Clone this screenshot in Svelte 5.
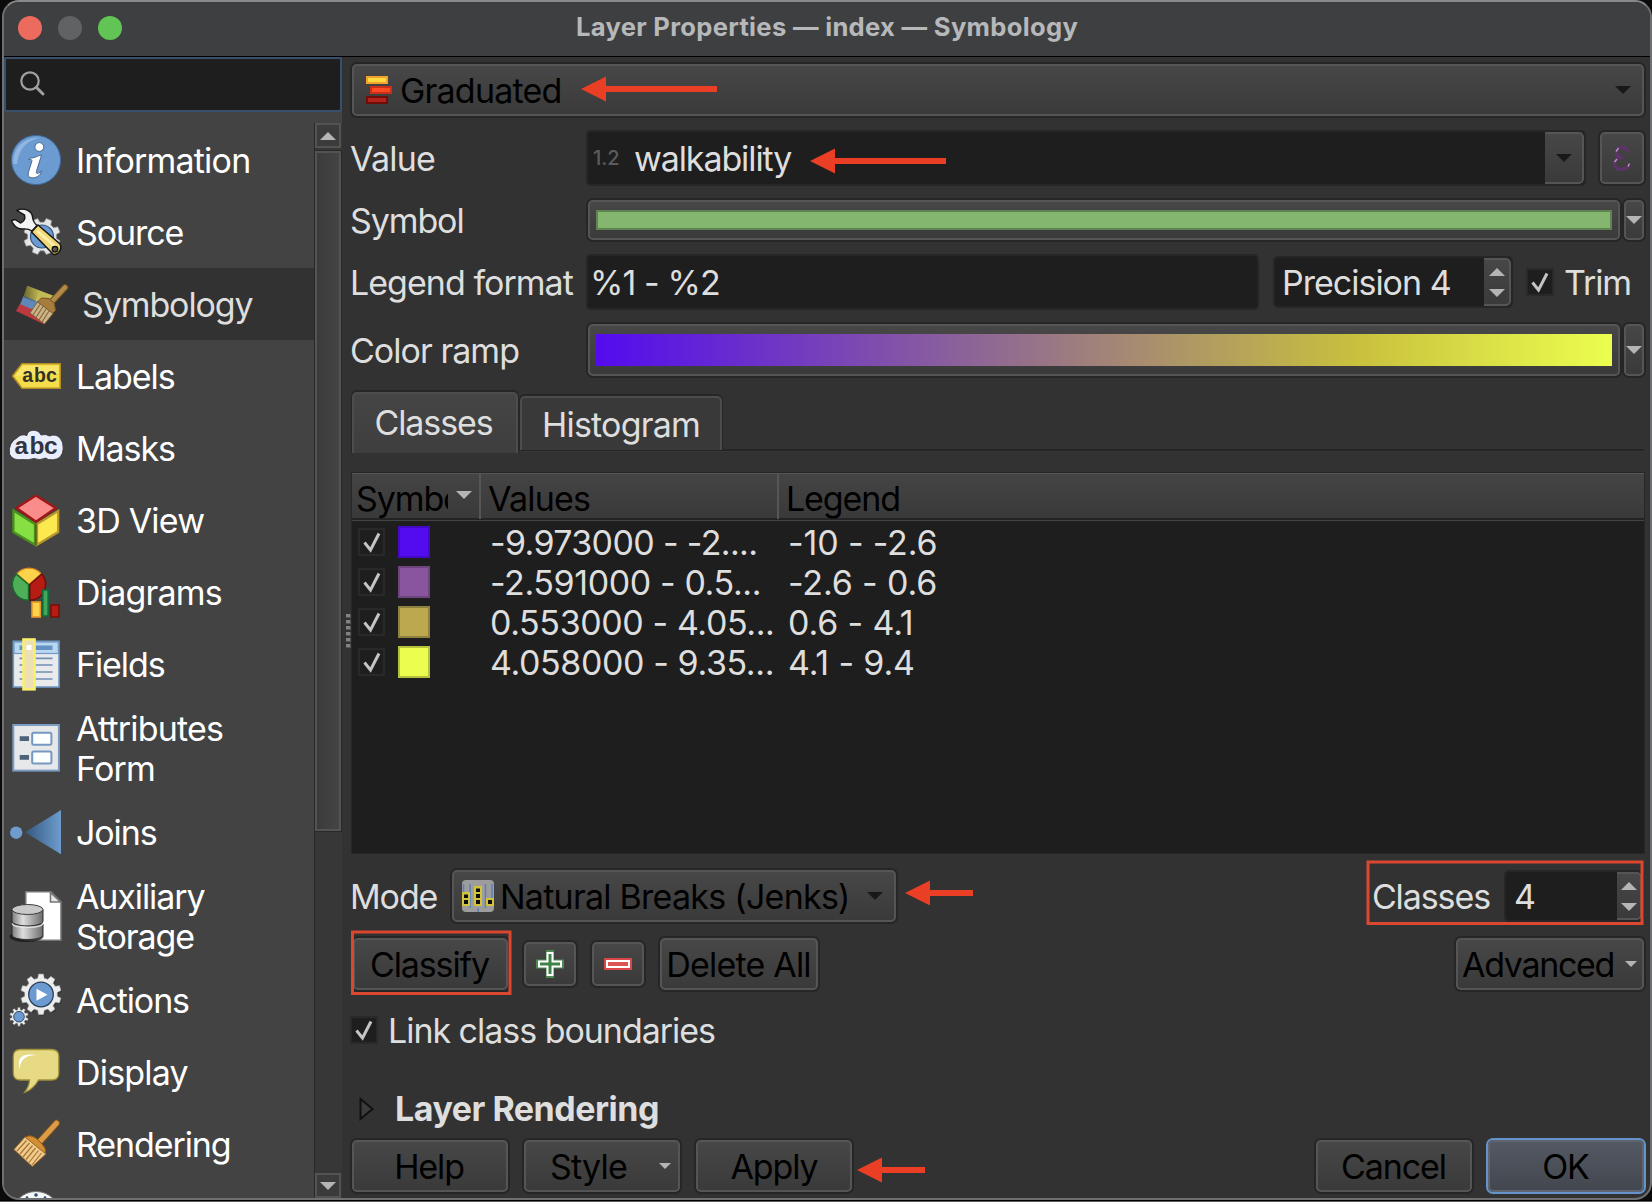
<script>
  // Outline of a toothed wheel centred on (cx, cy).
  function gear(cx, cy, outer, inner, teeth) {
    const step = (Math.PI * 2) / teeth;
    const pts = [];
    for (let i = 0; i < teeth; i++) {
      const a = i * step + step / 2;
      for (const [r, o] of [[inner, -0.32], [outer, -0.2], [outer, 0.2], [inner, 0.32]]) {
        pts.push(`${(cx + r * Math.cos(a + o * step)).toFixed(2)},${(cy + r * Math.sin(a + o * step)).toFixed(2)}`);
      }
    }
    return pts.join(' ');
  }

  const sections = [
    { id: 'info', label: 'Information' },
    { id: 'source', label: 'Source' },
    { id: 'symbology', label: 'Symbology', selected: true },
    { id: 'labels', label: 'Labels' },
    { id: 'masks', label: 'Masks' },
    { id: 'view3d', label: '3D View' },
    { id: 'diagrams', label: 'Diagrams' },
    { id: 'fields', label: 'Fields' },
    { id: 'form', label: 'Attributes Form', tall: true },
    { id: 'joins', label: 'Joins' },
    { id: 'storage', label: 'Auxiliary Storage', tall: true },
    { id: 'actions', label: 'Actions' },
    { id: 'display', label: 'Display' },
    { id: 'rendering', label: 'Rendering' },
    { id: 'temporal', label: '' }
  ];
  const roomy = ['info', 'diagrams', 'form', 'view3d', 'display'];

  const classes = [
    { color: '#530bef', edge: '#4409c4', values: '-9.973000 - -2....', legend: '-10 - -2.6' },
    { color: '#8a559f', edge: '#6f4580', values: '-2.591000 - 0.5...', legend: '-2.6 - 0.6' },
    { color: '#bca94f', edge: '#8f813f', values: '0.553000 - 4.05...', legend: '0.6 - 4.1' },
    { color: '#ebfe4f', edge: '#b3c13d', values: '4.058000 - 9.35...', legend: '4.1 - 9.4' }
  ];

  const arrows = [
    { x: 581, y: 89, end: 717 },
    { x: 810, y: 161, end: 946 },
    { x: 905, y: 893, end: 973 },
    { x: 857, y: 1170, end: 925 }
  ];
</script>

{#snippet tri(kind)}
  <svg class="tri {kind}" viewBox="0 0 16 8"><path d={kind.includes('up') ? 'M0 8L8 0L16 8Z' : 'M0 0H16L8 8Z'} /></svg>
{/snippet}

{#snippet check(kind)}
  <i class="check {kind}"><svg viewBox="0 0 28 28"><path d="M6.5 14.5L12.5 22L21 5.5" /></svg></i>
{/snippet}

{#snippet icon(id)}
  <svg class="icon" viewBox="0 0 52 52">
    {#if id === 'info'}
      <circle cx="26" cy="26" r="24.6" fill="#6b9bd1" stroke="#3c68a0" stroke-width="1" />
      <path d="M3.5 30C2 14 14 3 31 3.5C17 6 9 14 7 30Z" fill="#9dbfe4" opacity=".75" />
      <circle cx="29.3" cy="13" r="4.4" fill="#fff" stroke="#35567f" stroke-width=".8" />
      <path d="M20.5 24C24 24.5 27 22 31.5 21L26.5 37C25.6 40.5 28.5 40 31.5 37C30 42.5 25.5 44 22 43.8C18.5 43.5 17.5 41.5 18.7 37.5L21.8 27.5C22.3 25.5 21.5 25.3 18.5 25.4Z" fill="#fff" stroke="#35567f" stroke-width=".8" />
    {:else if id === 'source'}
      <polygon points={gear(32, 30.5, 18.5, 14.5, 8)} fill="#e4e5e6" stroke="#9a9a9a" stroke-width=".7" />
      <circle cx="32" cy="30.5" r="11.5" fill="#6b9bd1" stroke="#33557f" stroke-width="1.2" />
      <path d="M7 4.5C14 1 22 5 22.5 11C23 15 24 17 27 19.5L22 25C18.5 22.5 16 22.5 12 23C7 23 3 19 1.5 14.5L5 13.5L10.5 17C14 15.5 15.5 12.5 14.5 9Z" fill="#f3f3f3" stroke="#161616" stroke-width="1.4" />
      <path d="M21.5 26L28 19L50 38C52.5 43 48.5 49 43.5 48.5Z" fill="#f1d777" stroke="#161616" stroke-width="1.5" />
      <path d="M27 25L46 41" stroke="#fff0ae" stroke-width="2.5" />
      <circle cx="45" cy="43.3" r="2.8" fill="#5b5a50" stroke="#111" stroke-width="1.3" />
    {:else if id === 'symbology'}
      <defs><linearGradient id="fold"><stop offset="0" stop-color="#000" stop-opacity=".45" /><stop offset="1" stop-color="#000" stop-opacity="0" /></linearGradient></defs>
      <path d="M11.3 7.7L39.5 18.5L35 30L7.5 19Z" fill="#c4ba55" />
      <path d="M7.5 18L35.5 29L32 38L3.8 27Z" fill="#5f87b8" />
      <path d="M3.8 26L31.5 38L27.3 46L0 33Z" fill="#bd383f" />
      <path d="M11.3 7.7L24 12.6L19 24L7.5 19Z" fill="url(#fold)" />
      <path d="M49 9.5L36 23.5" stroke="#6e5223" stroke-width="6.5" stroke-linecap="round" />
      <path d="M49 9.5L35 24.5" stroke="#b28a45" stroke-width="4.5" stroke-linecap="round" />
      <path d="M25.5 20L33 20.5L38.5 25.5L39.5 32.5L36.5 35.5L21.5 24Z" fill="#a67d3c" stroke="#6e5223" stroke-width="1" />
      <path d="M21.5 24L37 35.5L28.5 46L14 35Z" fill="#cdb488" stroke="#75592c" stroke-width=".8" />
      <path d="M24 26.5L17 37M27 28.5L20 39.5M30 31L23 42M33 33L26 44" stroke="#80643a" stroke-width="1.1" />
    {:else if id === 'labels'}
      <path d="M2.6 26L12 13.8H50.2V38.2H12Z" fill="#f5dc4b" stroke="#b38f22" stroke-width="1.6" />
      <path d="M5.5 26L13 15.8H48.5V24Z" fill="#faea7c" opacity=".6" />
      <text x="12.3 24 36" y="31.8" font-size="19.5" class="abc">abc</text>
    {:else if id === 'masks'}
      <path d="M7.5 15.5Q11 11.5 17 13.5Q17.5 8.500 23.5 8.3Q29 8.5 31 13Q36 11.5 39.5 14Q46 11.5 50 16Q53.500 20 53.200 27Q52.500 37 43 37.8Q38 38.2 35.5 36Q30 39 24 36.5Q18 38.5 12.5 37.5Q2.500 39 -.5 32Q-2 20.5 7.5 15.5Z" fill="#eaedfb" stroke="#2e2f33" stroke-width=".8" />
      <text x="4.5 19.5 34" y="31.8" font-size="24.5" class="abc blue">abc</text>
    {:else if id === 'view3d'}
      <path d="M3.4 16.5L25 30V50.8L3.4 38Z" fill="#86e043" stroke="#49901d" stroke-width="2.3" />
      <path d="M48.2 17L27 30V50.8L48.2 38Z" fill="#fce94f" stroke="#b8962e" stroke-width="2.3" />
      <path d="M25.8 1.6L45.8 14L26 27.7L6.5 14Z" fill="#fb8c8c" stroke="#a01717" stroke-width="2.4" />
      <path d="M26 29.5V51.5" stroke="#4a5a12" stroke-width="1.4" />
    {:else if id === 'diagrams'}
      <path d="M19 18.3L6.7 7.9A16 16 0 0 1 31.3 7.9Z" fill="#fcd34a" stroke="#d98a1c" stroke-width="1.4" />
      <path d="M18.5 18.5V34.3A16 16 0 0 1 6.2 8Z" fill="#4fae58" stroke="#176b2c" stroke-width="1.4" />
      <path d="M19.8 18.5V34.3A16 16 0 0 0 31.8 8Z" fill="#b51d14" stroke="#6d0d08" stroke-width="1.4" />
      <rect x="22" y="36" width="8.3" height="15" fill="#fcd34a" stroke="#e8962a" stroke-width="1.6" />
      <rect x="32.8" y="24" width="5.4" height="26" fill="#43a65b" stroke="#126b3b" stroke-width="1.6" />
      <rect x="41" y="39" width="8" height="12" fill="#b51d14" stroke="#7c0f08" stroke-width="1.6" />
    {:else if id === 'fields'}
      <rect x="3.3" y="3.3" width="45.7" height="45.7" fill="#e8eaec" stroke="#6f99c6" stroke-width="1.6" />
      <rect x="4" y="4" width="44.3" height="11.5" fill="#b9d8f0" stroke="#6f99c6" stroke-width="1.2" />
      <path d="M9.5 9.7H42.5" stroke="#6592c4" stroke-width="4.6" />
      <path d="M9.5 20.3H42.5M9.5 27H42.5M9.5 34H42.5M9.5 41H42.5" stroke="#6f8fb3" stroke-width="1.7" />
      <rect x="13.4" y="1.4" width="11.2" height="50" fill="#ece0b4" stroke="#fbf06c" stroke-width="2.4" />
      <rect x="16.5" y="7" width="5" height="5" fill="#fff" />
    {:else if id === 'form'}
      <rect x="3.3" y="3" width="45.6" height="45.6" fill="#e6e8ea" stroke="#7c9cc2" stroke-width="2" />
      <rect x="22.2" y="10.7" width="19.2" height="12" rx="1.5" fill="#fbffff" stroke="#7697bf" stroke-width="2" />
      <rect x="22.2" y="29.5" width="19.2" height="12" rx="1.5" fill="#fbffff" stroke="#7697bf" stroke-width="2" />
      <path d="M9.7 16.7H19M9.7 35.3H19" stroke="#4d6179" stroke-width="4.7" />
    {:else if id === 'joins'}
      <defs><linearGradient id="cone"><stop offset="0" stop-color="#34587f" /><stop offset="1" stop-color="#6d9ccd" /></linearGradient></defs>
      <circle cx="6.2" cy="26.7" r="6.2" fill="#6d9ccd" />
      <path d="M15 26.3L51 4V48.3Z" fill="url(#cone)" />
    {:else if id === 'storage'}
      <defs><linearGradient id="drum"><stop offset="0" stop-color="#7d7d7d" /><stop offset=".35" stop-color="#dedede" /><stop offset="1" stop-color="#6b6b6b" /></linearGradient></defs>
      <path d="M15.7 1.7H41L51 12V50.3H15.7Z" fill="#fff" stroke="#757575" stroke-width="1.6" />
      <path d="M40.5 2.5V12H50.5Z" fill="#e8e8e8" stroke="#757575" stroke-width="1.6" />
      <ellipse cx="16.5" cy="46.5" rx="17" ry="5.5" fill="#111" opacity=".7" />
      <path d="M2 34V45C2 51 33 51 33 45V34Z" fill="url(#drum)" stroke="#2b2b2b" stroke-width="1" />
      <path d="M2 19.5V31C2 37.5 33 37.5 33 31V19.5Z" fill="url(#drum)" stroke="#2b2b2b" stroke-width="1" />
      <path d="M2 33.5C4 38.8 31 38.8 33 33.5" fill="none" stroke="#e6e6e6" stroke-width="1.2" />
      <ellipse cx="17.5" cy="19.5" rx="15.5" ry="5" fill="#c9c9c9" stroke="#3c3c3c" stroke-width="1" />
    {:else if id === 'actions'}
      <polygon points={gear(32, 21.5, 20.5, 16.5, 10)} fill="#222" opacity=".5" />
      <polygon points={gear(31, 20.3, 20.5, 16.5, 10)} fill="#eceded" stroke="#8b8b8b" stroke-width=".6" />
      <circle cx="31" cy="20.5" r="12.3" fill="#6b9bd1" stroke="#2a3d55" stroke-width="1.3" />
      <path d="M26.5 14.8V26.8L37.5 20.7Z" fill="#fff" />
      <polygon points={gear(9, 42.7, 9.5, 7.2, 10)} fill="#eceded" stroke="#555" stroke-width=".5" />
      <circle cx="9" cy="42.7" r="5.3" fill="#6b9bd1" stroke="#2a3d55" stroke-width=".9" />
    {:else if id === 'display'}
      <path d="M10.5 3.5H41.5Q48.8 3.5 48.8 10.5V27Q48.8 34 41.5 34H28.5Q23 43.5 14.7 46.3Q19.5 40 19.5 34H10.5Q3.3 34 3.3 27V10.5Q3.3 3.5 10.5 3.5Z" fill="#e7da85" stroke="#a3923a" stroke-width="1.3" />
      <path d="M9.5 23C7 12 11 6.5 27 9C17 9.5 11.5 11 9.5 23Z" fill="#fff" />
    {:else if id === 'rendering'}
      <path d="M46.5 5.2L29 24.5" stroke="#8a5417" stroke-width="6.8" stroke-linecap="round" />
      <path d="M46.5 5.2L28 25.5" stroke="#dc9c46" stroke-width="5" stroke-linecap="round" />
      <path d="M15 19Q22 15.5 28.5 22.5L32.5 26.5Q36.5 30.5 35.5 36Z" fill="#d48f35" stroke="#8a5417" stroke-width="1" />
      <path d="M15 19L35.8 36L22.3 48.5L4 31.5Z" fill="#efcb8f" stroke="#a06c24" stroke-width="1" />
      <path d="M16.5 22.5L7 33M19.5 25L10 36M22.5 27.5L13 39M25.5 30L16 41.5M28.5 32.5L19 44.5M31.5 35L22 47" stroke="#a9742d" stroke-width="1.2" />
    {:else}
      <circle cx="26" cy="26" r="24.5" fill="#f4f6f8" stroke="#777" stroke-width="1" />
      <circle cx="26" cy="5" r="1.8" fill="#2b4f73" /><circle cx="17" cy="7.5" r="1.3" fill="#2b4f73" /><circle cx="35" cy="7.5" r="1.3" fill="#2b4f73" />
    {/if}
  </svg>
{/snippet}

<div class="desk">
  <div class="window">
    <header class="titlebar">
      <i class="light close"></i><i class="light min"></i><i class="light max"></i>
      <h1>Layer Properties — index — Symbology</h1>
    </header>

    <div class="body">
      <aside>
        <div class="search">
          <svg viewBox="0 0 26 26"><circle cx="10" cy="10" r="8.7" /><path d="M16.5 16.5L23 23" /></svg>
        </div>
        <div class="nav">
          <ul>
            {#each sections as s (s.id)}
              <li class:selected={s.selected} class:tall={s.tall}>
                {@render icon(s.id)}
                <span class:roomy={roomy.includes(s.id)}>{s.label}</span>
              </li>
            {/each}
          </ul>
          <div class="scrollbar">
            <div class="step">{@render tri('up')}</div>
            <div class="thumb"></div>
            <div class="step last">{@render tri('down')}</div>
          </div>
        </div>
      </aside>

      <div class="grip">{#each Array(6) as _}<i></i>{/each}</div>

      <main>
        <div class="btn renderer">
          <svg class="gradicon" viewBox="0 0 26 28">
            <rect x="1" y="1" width="20" height="6" fill="#fddb3f" stroke="#f0a22c" stroke-width="2" />
            <rect x="5" y="11" width="20" height="6" fill="#ff4a24" stroke="#c8301a" stroke-width="2" />
            <rect x="1" y="21" width="20" height="6" fill="#b32319" stroke="#6f0d08" stroke-width="2" />
          </svg>
          <span class="roomy">Graduated</span>
          {@render tri('dark push')}
        </div>

        <div class="row value">
          <span class="label roomy">Value</span>
          <div class="field combo">
            <small>1.2</small><span>walkability</span>
            <div class="btn drop">{@render tri('dark')}</div>
          </div>
          <div class="btn eps">
            <svg viewBox="0 0 20 28">
              <path d="M16.5 7.5C13.5 1.5 4.5 2.5 4.5 8.2C4.5 12 8 13.3 11.5 13.3C5.5 13.3 2.5 16 2.5 19.5C2.5 26.5 14 27.5 17.5 20.5" />
              <path class="glint" d="M4 7.5L6.5 4M2.5 18L5 15M16 22.5L17.5 19.5" />
            </svg>
          </div>
        </div>

        <div class="row symbol">
          <span class="label">Symbol</span>
          <div class="btn preview"><div class="fill"></div></div>
          <div class="btn mini">{@render tri('pale')}</div>
        </div>

        <div class="row format">
          <span class="label wide">Legend format</span>
          <div class="field text"><span>%1 - %2</span></div>
          <div class="field spin precision"><span>Precision 4</span><div class="btn steps">{@render tri('up')}{@render tri('down')}</div></div>
          {@render check('trim')}
          <span>Trim</span>
        </div>

        <div class="row ramp">
          <span class="label wide">Color ramp</span>
          <div class="btn preview"><div class="fill gradient"></div></div>
          <div class="btn mini">{@render tri('pale')}</div>
        </div>

        <div class="tabs">
          <div class="tab on">Classes</div>
          <div class="tab roomy">Histogram</div>
        </div>

        <div class="table">
          <div class="tr head">
            <div class="th"><div class="clip">Symbol</div>{@render tri('pale sort')}</div>
            <div class="th roomy">Values</div>
            <div class="th">Legend</div>
          </div>
          {#each classes as c}
            <div class="tr">
              <div class="td first">
                {@render check('slim')}
                <i class="swatch" style="background:{c.color};border-color:{c.edge}"></i>
              </div>
              <div class="td range">{c.values}</div>
              <div class="td">{c.legend}</div>
            </div>
          {/each}
        </div>

        <div class="row mode">
          <span class="label">Mode</span>
          <div class="btn jenks">
            <svg class="modeicon" viewBox="0 0 32 32">
              <rect width="32" height="32" rx="4" fill="#9d9d9d" />
              <path d="M1.5 4V14M8 4V28M23.5 4V28M30 4V20M16 28V32" stroke="#5d83b5" stroke-width="1.6" />
              <path d="M0 12H8V26H0ZM12 6H20V26H12ZM24 18H32V26H24Z" fill="#d3c23c" />
              <path d="M2 14.5H6V18H2ZM2 20H6V24H2ZM14 8.5H18V12H14ZM14 14H18V18H14ZM14 20H18V24H14ZM26 20H30V24H26Z" fill="#0c0c0c" />
            </svg>
            <span class="breaks">Natural Breaks (Jenks)</span>
            {@render tri('dark push')}
          </div>
          <div class="count">
            <span>Classes</span>
            <div class="field spin"><span>4</span><div class="btn steps">{@render tri('up')}{@render tri('down')}</div></div>
          </div>
        </div>

        <div class="row tools">
          <div class="btn classify"><span>Classify</span></div>
          <div class="btn sq">
            <svg viewBox="0 0 28 28"><path d="M10 0H18V9.5H28V18.5H18V28H10V18.5H0V9.5H10Z" fill="#4c8a52" /><path d="M11.5 3H16.5V11.5H25V16.5H16.5V25H11.5V16.5H3V11.5H11.5Z" fill="#3f8247" stroke="#fff" stroke-width="2" /></svg>
          </div>
          <div class="btn sq">
            <svg viewBox="0 0 28 28"><rect y="8" width="28" height="12" fill="#d9474a" /><rect x="3" y="11" width="22" height="6" fill="#dc5356" stroke="#fff" stroke-width="2" /></svg>
          </div>
          <div class="btn wipe"><span class="roomy">Delete All</span></div>
          <div class="btn advanced"><span>Advanced</span>{@render tri('pale tiny')}</div>
        </div>

        <div class="row link">{@render check('')}<span>Link class boundaries</span></div>

        <div class="row group">
          <svg viewBox="0 0 16 24"><path d="M1.5 2V22L13.5 12Z" /></svg>
          <b>Layer Rendering</b>
        </div>

        <div class="row actions">
          <div class="btn act help"><span>Help</span></div>
          <div class="btn act style"><span class="roomy">Style</span>{@render tri('pale tiny')}</div>
          <div class="btn act"><span>Apply</span></div>
          <div class="btn act cancel"><span>Cancel</span></div>
          <div class="btn ok"><span>OK</span></div>
        </div>
      </main>
    </div>
  </div>

  <svg class="marks" viewBox="0 0 1652 1202">
    {#each arrows as a}
      <path d="M{a.x} {a.y}l25 -12.5v9.5H{a.end}v6H{a.x + 25}v9.5Z" />
    {/each}
    <rect x="352.5" y="932" width="157.5" height="61.5" />
    <rect x="1368" y="862" width="274" height="61.5" />
  </svg>
</div>

<style>
  :global(body) { background: #0c0c0d; }
  .desk {
    position: relative; width: 1652px; height: 1202px; overflow: hidden; box-sizing: border-box;
    padding-left: 2px; background: linear-gradient(#0b0b0c 1200px, #000 1200px 1201px, #5a5a5a 1201px);
    font: 430 34px/40px Inter, "Liberation Sans", sans-serif; letter-spacing: -1.1px; color: #dedede;
  }
  .desk :global(*) { box-sizing: border-box; }
  .window {
    width: 1650px; height: 1200px; border: 2px solid #6f7072; border-top-color: #88898b; border-radius: 17px;
    overflow: hidden; background: #323232; display: flex; flex-direction: column;
  }
  .titlebar {
    height: 55px; flex: none; display: flex; align-items: center; padding: 0 14px 3px; gap: 16px;
    background: #3e3f41; border-bottom: 1px solid #000;
  }
  .light { width: 24px; height: 24px; border-radius: 50%; flex: none; }
  .close { background: #ed6a5f; }
  .min { background: #616264; }
  .max { background: #61c454; }
  h1 { margin: 0 120px 0 0; padding-bottom: 2px; flex: 1; text-align: center; font-size: 25.6px; line-height: 30px; font-weight: 700; color: #b7b8ba; letter-spacing: 0.3px; }
  span { padding-top: 2px; }
  .roomy { letter-spacing: -0.8px; }

  .body { flex: 1; display: flex; min-height: 0; }
  aside { width: 338px; flex: none; background: #434343; display: flex; flex-direction: column; }
  .search { height: 55px; flex: none; background: #1e1e1e; border: 2px solid #39506d; border-radius: 3px; padding: 12px 0 0 14px; }
  .search svg { width: 26px; height: 26px; display: block; fill: none; stroke: #a0a0a0; stroke-width: 2.2; }
  .search path { stroke-width: 3; stroke-linecap: round; }
  .nav { flex: 1; display: flex; min-height: 0; padding-top: 12px; }
  ul { list-style: none; margin: 0; padding: 0; width: 310px; overflow: hidden; }
  li { height: 72px; display: flex; align-items: center; gap: 14px; padding-left: 6px; color: #fff; }
  li.tall { height: 96px; }
  li span { width: 200px; }
  li.selected { background: #323232; padding-left: 12px; color: #dedede; }
  .icon { width: 52px; height: 52px; flex: none; overflow: visible; }
  .abc { font-family: "Liberation Sans", sans-serif; font-weight: 700; fill: #343226; letter-spacing: 0; }
  .blue { fill: #2f3442; }

  .scrollbar { width: 28px; margin-top: -1px; background: #373737; border-left: 1px solid #292929; display: flex; flex-direction: column; }
  .step { height: 25px; border: 2px solid #535353; background: #3b3b3b; display: grid; place-items: center; margin-right: 1px; }
  .thumb { height: 680px; margin: 3px 1px 0 0; border: 2px solid #535353; background: linear-gradient(90deg, #3b3b3b, #444); box-shadow: 0 0 0 1px #292929; }
  .last { margin-top: auto; margin-bottom: 0; }

  .tri { width: 16px; height: 8px; fill: #b5b5b5; display: block; flex: none; }
  .tri.dark { fill: #181818; }
  .tri.tiny { width: 12px; height: 6px; }
  .tri.push { margin-left: auto; }

  .grip { width: 9px; flex: none; display: flex; flex-direction: column; gap: 2px; padding: 557px 0 0 4px; }
  .grip i { width: 5px; height: 4px; background: #828282; border-right: 1px solid #555; border-bottom: 1px solid #555; flex: none; }

  main { flex: 1; display: flex; flex-direction: column; padding: 7px 6px 0 1px; min-width: 0; }
  .row { display: flex; align-items: center; flex: none; }
  .label { flex: none; width: 236px; margin-left: -2px; white-space: nowrap; }
  .wide { letter-spacing: -0.97px; }
  .btn {
    border: 2px solid #555; border-radius: 5px; background: linear-gradient(#474747, #3a3a3a); box-shadow: 0 0 0 2px #262626;
    color: #000; display: flex; align-items: center; justify-content: center; flex: none; white-space: nowrap;
  }
  .field { background: #1e1e1e; border: 2px solid #262626; border-radius: 5px; display: flex; align-items: center; white-space: nowrap; }

  .renderer { height: 52px; justify-content: flex-start; padding: 0 11px 0 12px; }
  .gradicon { width: 26px; height: 28px; margin-right: 8px; }

  .value { height: 56px; margin-top: 14px; }
  .combo { width: 1000px; height: 56px; padding-left: 5px; }
  small { font-size: 20px; letter-spacing: 0; color: #5c5c5c; width: 41px; line-height: 36px; font-weight: 500; }
  .drop { width: 39px; height: 52px; margin-left: auto; border-left: 0; border-radius: 0 5px 5px 0; box-shadow: none; }
  .eps { width: 44px; height: 52px; margin-left: auto; }
  .eps svg { width: 20px; height: 28px; fill: none; stroke: #5d3469; stroke-width: 3.4; }
  .eps .glint { stroke: #b795c2; stroke-width: 1.4; }

  .symbol { height: 40px; margin-top: 14px; }
  .preview { width: 1032px; height: 100%; margin-left: 2px; }
  .fill { width: 1016px; height: 20px; background: #85b66f; border: 2px solid #5f8352; }
  .mini { width: 20px; height: 100%; margin-left: auto; }

  .format { height: 56px; margin-top: 14px; }
  .text { width: 673px; height: 56px; padding-left: 2px; }
  .text span { letter-spacing: -0.9px; }
  .spin { height: 52px; padding-left: 7px; }
  .precision { width: 240px; margin-left: 14px; }
  .precision span { letter-spacing: -1px; }
  .steps { width: 27px; height: 48px; margin-left: auto; flex-direction: column; gap: 13px; border-left: 0; border-radius: 0 5px 5px 0; box-shadow: none; }
  .check { width: 28px; height: 28px; background: #1e1e1e; border: 2px solid #292929; flex: none; display: grid; }
  .check svg { width: 28px; height: 28px; margin: -2px; fill: none; stroke: #c4c4c4; stroke-width: 3; }
  .check.trim { margin: 0 10px 0 13px; }

  .ramp { height: 52px; margin-top: 14px; }
  .gradient { height: 32px; border: 0; background: linear-gradient(90deg, #530bef, #c8bf3e 74.5%, #ebfe4f); }

  .tabs { height: 62px; margin-top: 15px; display: flex; gap: 2px; flex: none; background: linear-gradient(transparent 58px, #252525 58px 60px, #373737 60px 61px, transparent 61px); }
  .tab { height: 54px; width: 202px; margin-top: 5px; border: 2px solid #4d4d4d; border-bottom: 0; border-radius: 5px 5px 0 0; background: #393939; box-shadow: 0 -1px 0 1px #262626; display: grid; place-items: center; padding-top: 2px; clip-path: inset(-3px -2px 0 -2px); }
  .tab.on { height: 61px; width: 166px; margin-top: 1px; padding: 0 3px 1px 0; background: linear-gradient(#454545, #3e3e3e); }

  .table { height: 382px; margin: 19px -1px 0; border: 1px solid #272727; background: #1e1e1e; flex: none; }
  .tr { display: grid; grid-template-columns: 129px 298px 1fr; height: 40px; align-items: center; padding-right: 1px; }
  .head { height: 48px; border-top: 1px solid #555; background: linear-gradient(#444, #393939); border-bottom: 1px solid #444; box-shadow: inset 0 -2px #232323; color: #000; }
  .th { height: 45px; display: flex; align-items: center; border-right: 2px solid #565656; padding: 4px 0 0 7px; align-self: start; }
  .th:last-child { border: 0; }
  .clip { width: 92px; overflow: hidden; margin-left: -3px; }
  .sort { margin: -8px 0 0 8px; }
  .td { padding: 2px 0 0 9px; white-space: nowrap; letter-spacing: -0.15px; }
  .range { letter-spacing: -0.4px; }
  .tr:nth-child(2) .range { letter-spacing: -0.65px; }
  .td.first { display: flex; align-items: center; gap: 13px; padding: 0 0 0 6px; }
  .slim { width: 27px; background: none; }
  .swatch { width: 32px; height: 32px; border: 2px solid; }

  .mode { height: 52px; margin-top: 16px; }
  .mode .label { width: 102px; }
  .jenks { width: 444px; height: 52px; justify-content: flex-start; padding: 0 11px 0 8px; }
  .breaks { letter-spacing: -0.75px; }
  .modeicon { width: 32px; height: 32px; margin-right: 6px; }
  .count { margin-left: auto; display: flex; align-items: center; gap: 14px; }
  .count .spin { width: 140px; padding-left: 8px; }
  .count .steps { width: 25px; }

  .tools { height: 52px; margin-top: 16px; }
  .classify { width: 155px; height: 52px; margin-left: 1px; padding-right: 2px; }
  .sq { width: 52px; height: 44px; margin-left: 16px; }
  .sq svg { width: 28px; height: 28px; }
  .wipe { width: 158px; height: 52px; margin-left: 16px; padding-right: 1px; }
  .advanced { width: 188px; height: 52px; margin-left: auto; gap: 11px; padding-right: 1px; letter-spacing: -1.35px; }

  .link { height: 52px; margin-top: 14px; gap: 10px; margin-left: -2px; letter-spacing: -1.03px; }
  .group { height: 52px; margin-top: 27px; gap: 20px; padding-left: 7px; }
  .group svg { width: 16px; height: 24px; fill: #3c3c3c; stroke: #111; stroke-width: 2; }
  b { font-weight: 700; letter-spacing: -0.5px; }

  .actions { height: 52px; margin-top: 5px; gap: 16px; }
  .act { width: 156px; height: 52px; }
  .help { padding-right: 2px; }
  .style { gap: 32px; padding-left: 17px; }
  .cancel { margin-left: auto; padding-right: 1px; }
  .ok { width: 156px; height: 52px; border-color: #5f6671; background: linear-gradient(#535963, #43474f); box-shadow: 0 0 0 2px #6594cb; padding-right: 1px; }

  .marks { position: absolute; inset: 0; width: 1652px; height: 1202px; fill: #ea3f25; }
  .marks rect { fill: none; stroke: #dc4730; stroke-width: 3; }
</style>
